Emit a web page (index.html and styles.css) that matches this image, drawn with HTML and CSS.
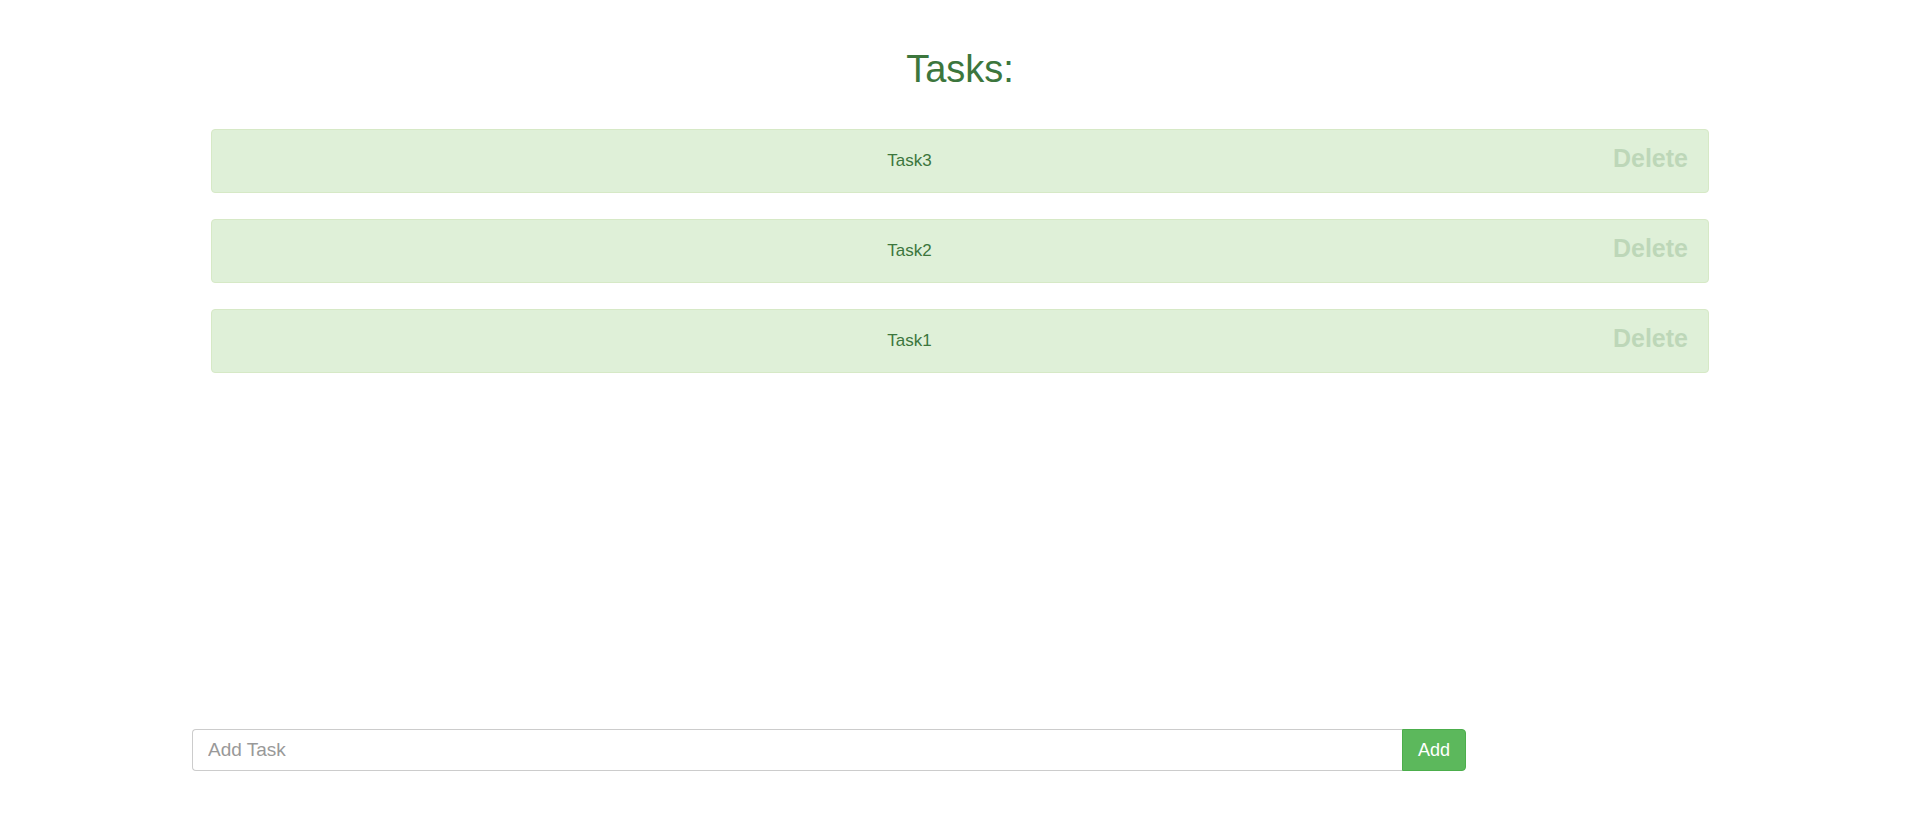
FILE: index.html
```html
<!DOCTYPE html>
<html>
<head>
<meta charset="utf-8">
<title>Tasks</title>
<link rel="stylesheet" href="styles.css">
</head>
<body>
<div class="page">
  <h1 class="title">Tasks:</h1>
  <div class="task-list">
    <div class="task">
      <span class="task-name">Task3</span>
      <button class="task-delete" type="button">Delete</button>
    </div>
    <div class="task">
      <span class="task-name">Task2</span>
      <button class="task-delete" type="button">Delete</button>
    </div>
    <div class="task">
      <span class="task-name">Task1</span>
      <button class="task-delete" type="button">Delete</button>
    </div>
  </div>
  <form class="add-form">
    <input class="add-input" type="text" placeholder="Add Task">
    <button class="add-button" type="button">Add</button>
  </form>
</div>
</body>
</html>
```

FILE: styles.css
```css
* { box-sizing: border-box; }

html, body {
  margin: 0;
  padding: 0;
  background: #ffffff;
  font-family: "Liberation Sans", Arial, sans-serif;
}

.page {
  min-height: 820px;
  display: flex;
  flex-direction: column;
}

.title {
  margin: 0;
  padding-top: 48px;
  font-size: 38px;
  line-height: 43px;
  font-weight: 400;
  color: #3c763d;
  text-align: center;
}

.task-list {
  flex: 1;
  display: flex;
  flex-direction: column;
  gap: 26px;
  margin: 38px 211px 0 211px;
}

.task {
  display: flex;
  align-items: center;
  height: 64px;
  background: #dff0d8;
  border: 1px solid #d6e9c6;
  border-radius: 4px;
  padding: 0 20px 0 0;
  color: #3c763d;
}

.task-name {
  flex: 1;
  text-align: center;
  font-size: 17px;
  line-height: 20px;
}

.task-delete {
  margin-left: 6px;
  padding: 0 0 5px 0;
  border: 0;
  background: transparent;
  font-family: "Liberation Sans", Arial, sans-serif;
  font-size: 25px;
  font-weight: 700;
  line-height: 25px;
  color: #3c763d;
  opacity: 0.2;
  cursor: pointer;
}

.add-form {
  display: flex;
  width: 1274px;
  margin: 0 0 49px 192px;
  height: 42px;
}

.add-input {
  flex: 1;
  height: 42px;
  border: 1px solid #ccc;
  border-right: 0;
  border-radius: 4px 0 0 4px;
  padding: 0 15px;
  font-family: "Liberation Sans", Arial, sans-serif;
  font-size: 19px;
  color: #555;
  outline: none;
}

.add-input::placeholder {
  color: #999;
}

.add-button {
  width: 64px;
  height: 42px;
  border: 1px solid #4cae4c;
  border-radius: 0 4px 4px 0;
  background: #5cb85c;
  color: #ffffff;
  font-family: "Liberation Sans", Arial, sans-serif;
  font-size: 18px;
  padding: 0;
  cursor: pointer;
}
```
